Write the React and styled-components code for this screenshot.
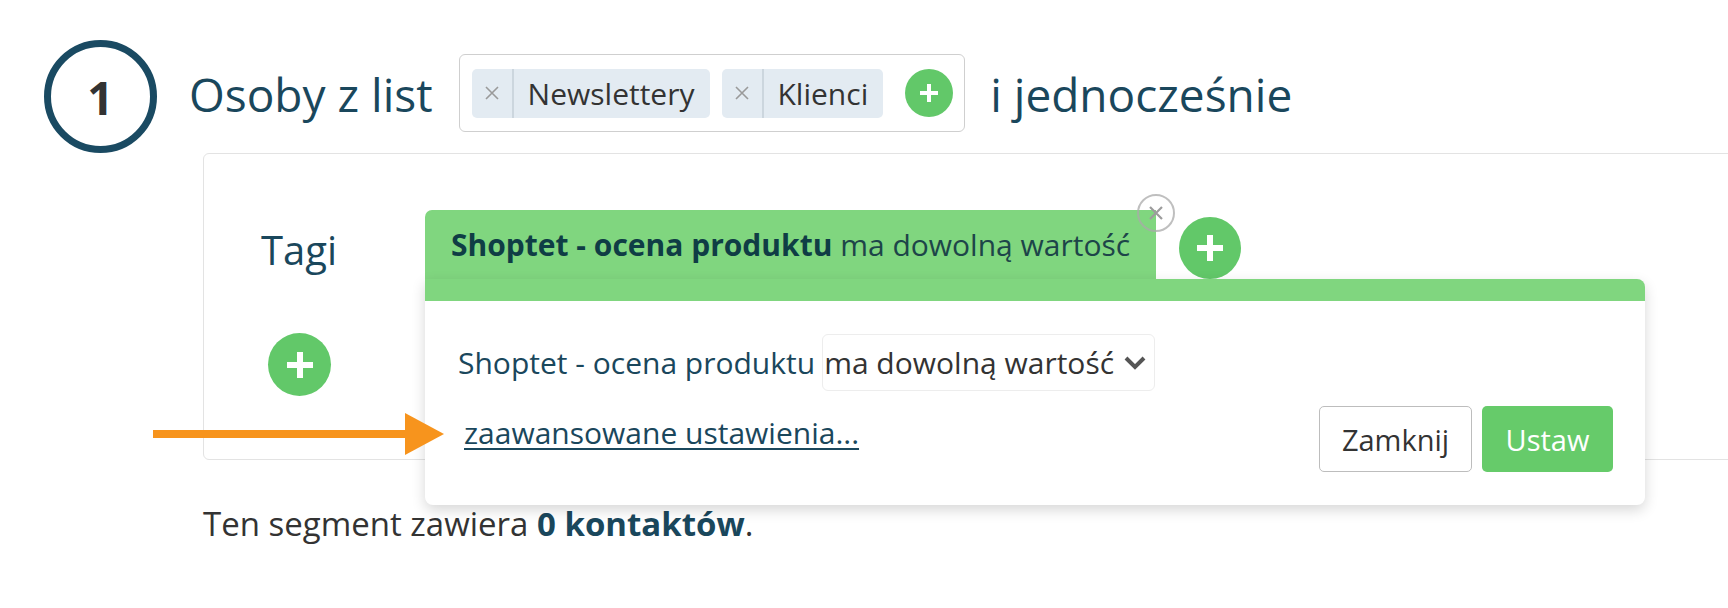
import React from 'react';
import styled, { createGlobalStyle } from 'styled-components';

const GlobalStyle = createGlobalStyle`
  html, body {
    margin: 0;
    padding: 0;
    background: #fff;
    overflow: hidden;
  }
  body {
    font-family: "Open Sans", "Noto Sans", sans-serif;
  }
`;

const Page = styled.div`
  position: relative;
  box-sizing: border-box;
  height: 608px;
  padding: 40px 0 0 44px;
  overflow: hidden;
`;

const Header = styled.div`
  display: flex;
  align-items: center;
  height: 113px;
`;

const StepCircle = styled.div`
  box-sizing: border-box;
  width: 113px;
  height: 113px;
  border: 7px solid #1a4a62;
  border-radius: 50%;
  display: flex;
  align-items: center;
  justify-content: center;
  font-size: 46px;
  font-weight: 700;
  color: #333;
`;

const Heading = styled.span`
  font-size: 46px;
  line-height: 60px;
  color: #1a475c;
  margin: 0 0 5px ${({ $gap }) => $gap}px;
`;

const TagBox = styled.div`
  box-sizing: border-box;
  height: 78px;
  margin: 0 0 7px 26px;
  padding: 0 11px 0 12px;
  border: 1px solid #cfcfcf;
  border-radius: 6px;
  display: flex;
  align-items: center;
  gap: 12px;
`;

const Chip = styled.div`
  height: 49px;
  display: flex;
  align-items: stretch;
  background: #e3ebf2;
  border-radius: 5px;
`;

const ChipRemove = styled.span`
  width: 40px;
  display: flex;
  align-items: center;
  justify-content: center;
  border-right: 2px solid #ccd6de;
`;

const ChipLabel = styled.span`
  padding: 0 15px 0 14px;
  font-size: 30px;
  line-height: 49px;
  color: #333;
`;

const AddButton = styled.span`
  flex: none;
  width: ${({ $size }) => $size}px;
  height: ${({ $size }) => $size}px;
  border-radius: 50%;
  background: #62c869;
  display: flex;
  align-items: center;
  justify-content: center;
  margin-left: ${({ $ml = 0 }) => $ml}px;
  margin-top: ${({ $mt = 0 }) => $mt}px;
`;

const Panel = styled.div`
  display: flex;
  margin: 0 -12px 0 159px;
  padding: 56px 0 63px 57px;
  border: 1px solid #e3e3e3;
  border-radius: 6px;
`;

const LabelCol = styled.div`
  width: 164px;
  display: flex;
  flex-direction: column;
  align-items: flex-start;
`;

const Label = styled.span`
  margin-top: 14px;
  font-size: 40px;
  line-height: 52px;
  color: #1a475c;
`;

const ConditionCol = styled.div`
  position: relative;
  display: flex;
  align-items: flex-end;
  gap: 23px;
  height: 69px;
`;

const ConditionTab = styled.div`
  position: relative;
  height: 69px;
  padding: 0 26px;
  background: #80d67f;
  border-radius: 7px 0 0 0;
  font-size: 30px;
  line-height: 69px;
  color: #1d4549;
  white-space: nowrap;

  b {
    font-weight: 700;
    color: #0f3d45;
  }
`;

const CloseBadge = styled.span`
  position: absolute;
  top: -16px;
  right: -19px;
  box-sizing: border-box;
  width: 38px;
  height: 38px;
  border: 2px solid rgba(170, 170, 170, 0.75);
  border-radius: 50%;
  display: flex;
  align-items: center;
  justify-content: center;
`;

const Popover = styled.div`
  position: absolute;
  top: 100%;
  left: 0;
  z-index: 2;
  box-sizing: border-box;
  width: 1220px;
  padding: 33px 32px 33px 33px;
  background: #fff;
  border-top: 22px solid #80d67f;
  border-radius: 0 8px 8px 8px;
  box-shadow: 0 5px 14px rgba(0, 0, 0, 0.16);
`;

const PopRow = styled.div`
  display: flex;
  align-items: center;
  font-size: 30px;
  color: #1a475c;
`;

const Select = styled.div`
  box-sizing: border-box;
  width: 333px;
  height: 57px;
  margin-left: 7px;
  padding: 0 8px 0 1px;
  border: 1px solid #ededed;
  border-radius: 6px;
  display: flex;
  align-items: center;
  justify-content: space-between;
  color: #333;
  white-space: nowrap;
`;

const PopFooter = styled.div`
  display: flex;
  align-items: center;
  justify-content: space-between;
  margin-top: 15px;
`;

const AdvancedLink = styled.a`
  margin: 0 0 12px 6px;
  font-size: 30px;
  line-height: 36px;
  color: #1a475c;
  text-decoration: underline;
  text-underline-offset: 4px;
  text-decoration-thickness: 2px;
`;

const Buttons = styled.div`
  display: flex;
  gap: 10px;
`;

const Button = styled.button`
  box-sizing: border-box;
  height: 66px;
  width: ${({ $w }) => $w}px;
  border-radius: 5px;
  font-family: inherit;
  font-size: 29px;
  cursor: pointer;
  border: ${({ $primary }) => ($primary ? 'none' : '1.5px solid #bdbdbd')};
  background: ${({ $primary }) => ($primary ? '#66cb6a' : '#fff')};
  color: ${({ $primary }) => ($primary ? '#fff' : '#333')};
`;

const Summary = styled.p`
  margin: 42px 0 0 159px;
  font-size: 33px;
  line-height: 44px;
  color: #333;

  b {
    color: #1a475c;
  }
`;

const Arrow = styled.svg`
  position: absolute;
  left: 150px;
  top: 411px;
  z-index: 3;
`;

const PlusIcon = ({ size, bar }) => (
  <svg width={size} height={size} viewBox={`0 0 ${size} ${size}`}>
    <rect x={(size - bar) / 2} y="0" width={bar} height={size} fill="#fff" />
    <rect x="0" y={(size - bar) / 2} width={size} height={bar} fill="#fff" />
  </svg>
);

const Cross = ({ size, color, width }) => (
  <svg width={size} height={size} viewBox="0 0 14 14">
    <path d="M1 1 L13 13 M13 1 L1 13" stroke={color} strokeWidth={width} fill="none" />
  </svg>
);

const lists = ['Newslettery', 'Klienci'];

const App = () => (
  <Page>
    <GlobalStyle />
    <Header>
      <StepCircle>1</StepCircle>
      <Heading $gap={32}>Osoby z list</Heading>
      <TagBox>
        {lists.map((name) => (
          <Chip key={name}>
            <ChipRemove>
              <Cross size={14} color="#9a9a9a" width={1.6} />
            </ChipRemove>
            <ChipLabel>{name}</ChipLabel>
          </Chip>
        ))}
        <AddButton $size={48} $ml={10}>
          <PlusIcon size={18} bar={4} />
        </AddButton>
      </TagBox>
      <Heading $gap={25}>i jednocześnie</Heading>
    </Header>

    <Panel>
      <LabelCol>
        <Label>Tagi</Label>
        <AddButton $size={63} $ml={7} $mt={57}>
          <PlusIcon size={26} bar={6} />
        </AddButton>
      </LabelCol>
      <ConditionCol>
        <ConditionTab>
          <b>Shoptet - ocena produktu</b> ma dowolną wartość
          <CloseBadge>
            <Cross size={14} color="#9c9c9c" width={2.2} />
          </CloseBadge>
        </ConditionTab>
        <AddButton $size={62}>
          <PlusIcon size={26} bar={6} />
        </AddButton>
        <Popover>
          <PopRow>
            Shoptet - ocena produktu
            <Select>
              ma dowolną wartość
              <svg width="22" height="14" viewBox="0 0 22 14">
                <path d="M2 2 L11 11 L20 2" stroke="#555" strokeWidth="4" fill="none" />
              </svg>
            </Select>
          </PopRow>
          <PopFooter>
            <AdvancedLink>zaawansowane ustawienia...</AdvancedLink>
            <Buttons>
              <Button $w={153}>Zamknij</Button>
              <Button $w={131} $primary>Ustaw</Button>
            </Buttons>
          </PopFooter>
        </Popover>
      </ConditionCol>
    </Panel>

    <Summary>
      Ten segment zawiera <b>0 kontaktów</b>.
    </Summary>

    <Arrow width="296" height="46" viewBox="0 0 296 46">
      <rect x="3" y="19" width="256" height="8" fill="#f7941d" />
      <polygon points="255,2 294,23 255,44" fill="#f7941d" />
    </Arrow>
  </Page>
);

export default App;
